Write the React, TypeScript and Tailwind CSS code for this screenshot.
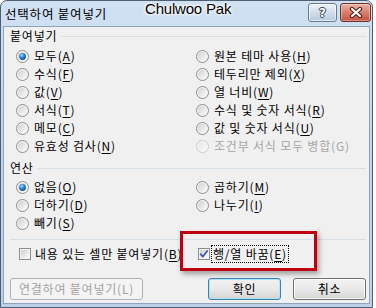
import React from "react";

function Mn({ t, k, disabled }: { t: string; k: string; disabled?: boolean }) {
  return (
    <span className={disabled ? "text-[#a6a6a6] whitespace-nowrap" : "whitespace-nowrap"}>
      {t}(
      <span className={disabled ? "" : "underline underline-offset-[2px] decoration-[1px]"}>{k}</span>)
    </span>
  );
}

function Radio({ checked, disabled }: { checked?: boolean; disabled?: boolean }) {
  return (
    <svg width="13" height="13" viewBox="0 0 13 13" className="shrink-0">
      <defs>
        <linearGradient id="rfill" x1="0" y1="0" x2="1" y2="1">
          <stop offset="0" stopColor="#cfcfcf" />
          <stop offset="1" stopColor="#fdfdfd" />
        </linearGradient>
        <linearGradient id="rfillD" x1="0" y1="0" x2="1" y2="1">
          <stop offset="0" stopColor="#e6e6e6" />
          <stop offset="1" stopColor="#fbfbfb" />
        </linearGradient>
        <radialGradient id="rdot" cx="0.38" cy="0.32" r="0.75">
          <stop offset="0" stopColor="#a6dcff" />
          <stop offset="0.45" stopColor="#2b8ce0" />
          <stop offset="1" stopColor="#0b3e8a" />
        </radialGradient>
      </defs>
      <circle cx="6.5" cy="6.5" r="6" fill="#f6f6f6" stroke={disabled ? "#cacaca" : "#8c8c8c"} strokeWidth="1" />
      <circle cx="6.5" cy="6.5" r="4.6" fill={disabled ? "url(#rfillD)" : "url(#rfill)"} />
      {checked && <circle cx="6.5" cy="6.5" r="3.4" fill="url(#rdot)" />}
    </svg>
  );
}

function Check({ checked }: { checked?: boolean }) {
  return (
    <svg width="12" height="12" viewBox="0 0 12 12" className="shrink-0">
      <defs>
        <linearGradient id="cfill" x1="0" y1="0" x2="1" y2="1">
          <stop offset="0" stopColor="#cfcfcf" />
          <stop offset="1" stopColor="#fbfbfb" />
        </linearGradient>
      </defs>
      <rect x="0.5" y="0.5" width="11" height="11" fill="#f5f5f5" stroke="#8c8c8c" />
      <rect x="2" y="2" width="8" height="8" fill="url(#cfill)" />
      {checked && (
        <path d="M2.6 6.2 L4.9 8.6 L9.4 2.8" fill="none" stroke="#3d57a6" strokeWidth="1.7" strokeLinecap="round" strokeLinejoin="round" />
      )}
    </svg>
  );
}

function RadioRow({ t, k, checked, disabled }: { t: string; k: string; checked?: boolean; disabled?: boolean }) {
  return (
    <div className="flex items-center gap-[5px] h-[18px]">
      <Radio checked={checked} disabled={disabled} />
      <Mn t={t} k={k} disabled={disabled} />
    </div>
  );
}

function GroupHeader({ label }: { label: string }) {
  return (
    <div className="flex items-center h-[18px] gap-[4px]">
      <span className="whitespace-nowrap">{label}</span>
      <div className="flex-1 h-px bg-[#d5dfe5]" />
    </div>
  );
}

export default function App() {
  return (
    <div className="relative w-[376px] h-[308px] bg-white overflow-hidden font-['Noto_Sans_CJK_KR','Noto_Sans',sans-serif] text-[12px] leading-[18px] tracking-[0.8px] text-black">
      <div className="flex flex-col w-[373px] h-[308px] rounded-t-[7px] border border-[#4e5e70] bg-linear-to-b from-[#d0e1f3] via-[#c0d5eb] to-[#bcd1e8]">
        {/* title bar */}
        <div className="flex items-start h-[25px] shrink-0 pl-[4px] pr-[1px]">
          <span className="mt-[4px] text-[12.5px] leading-[17px] whitespace-nowrap">선택하여 붙여넣기</span>
          <div className="ml-auto mt-[2px] flex gap-[3px] tracking-normal">
            <div className="relative w-[29px] h-[19px] rounded-[3px] border border-[#6b7b8c] bg-linear-to-b from-[#eef3f9] via-[#d2deeb] to-[#b9cadd] shadow-[inset_0_0_0_1px_rgba(255,255,255,0.6)] flex items-center justify-center">
              <span className="font-['DejaVu_Sans',sans-serif] font-bold text-[12px] leading-[12px] text-white [text-shadow:0_0_1px_#3a4654,1px_0_0_#3a4654,-1px_0_0_#3a4654,0_1px_0_#3a4654,0_-1px_0_#3a4654]">?</span>
            </div>
            <div className="relative w-[31px] h-[19px] rounded-[3px] border border-[#6e2f27] bg-linear-to-b from-[#eab2a5] via-[#d7806c] to-[#c4503c] shadow-[inset_0_0_0_1px_rgba(255,255,255,0.35)] flex items-center justify-center">
              <svg width="14" height="11" viewBox="0 0 14 11">
                <path d="M3 2 L11 9 M11 2 L3 9" stroke="#4a1d18" strokeWidth="4.2" strokeLinecap="round" />
                <path d="M3 2 L11 9 M11 2 L3 9" stroke="#ffffff" strokeWidth="2.2" strokeLinecap="round" />
              </svg>
            </div>
          </div>
        </div>

        {/* client area */}
        <div className="flex-1 mx-[2px] mb-[3px] border border-[#8ea4bc] bg-[#f0f0f0] flex flex-col pl-[6px] pr-[3px]">
          <GroupHeader label="붙여넣기" />
          <div className="mt-[2px] ml-[6px] grid grid-cols-[180px_1fr]">
            <RadioRow t="모두" k="A" checked />
            <RadioRow t="원본 테마 사용" k="H" />
            <RadioRow t="수식" k="F" />
            <RadioRow t="테두리만 제외" k="X" />
            <RadioRow t="값" k="V" />
            <RadioRow t="열 너비" k="W" />
            <RadioRow t="서식" k="T" />
            <RadioRow t="수식 및 숫자 서식" k="R" />
            <RadioRow t="메모" k="C" />
            <RadioRow t="값 및 숫자 서식" k="U" />
            <RadioRow t="유효성 검사" k="N" />
            <RadioRow t="조건부 서식 모두 병합" k="G" disabled />
          </div>

          <div className="mt-[4px]">
            <GroupHeader label="연산" />
          </div>
          <div className="mt-[1px] ml-[6px] grid grid-cols-[180px_1fr]">
            <RadioRow t="없음" k="O" checked />
            <RadioRow t="곱하기" k="M" />
            <RadioRow t="더하기" k="D" />
            <RadioRow t="나누기" k="I" />
            <RadioRow t="빼기" k="S" />
          </div>

          <div className="mt-[7px] h-px bg-[#d5dfe5]" />

          <div className="mt-[5px] ml-[9px] flex items-center h-[18px]">
            <div className="w-[179px] flex items-center gap-[4px]">
              <Check />
              <Mn t="내용 있는 셀만 붙여넣기" k="B" />
            </div>
            <div className="flex items-center gap-[2px]">
              <Check checked />
              <span className="outline-1 outline-dotted outline-[#000] px-[1px] leading-[16px]">
                <Mn t="행/열 바꿈" k="E" />
              </span>
            </div>
          </div>

          <div className="mt-[15px] flex items-center h-[22px]">
            <div className="w-[133px] h-[22px] rounded-[3px] border border-[#adb2b5] bg-[#f4f4f4] text-[#a3a3a3] flex items-center justify-center whitespace-nowrap">
              연결하여 붙여넣기(L)
            </div>
            <div className="ml-auto w-[73px] h-[22px] rounded-[3px] border border-[#3c7fb1] bg-linear-to-b from-[#f2f2f2] via-[#e9e9e9] to-[#d4d4d4] shadow-[inset_0_0_0_1px_#aee6fb] flex items-center justify-center">
              확인
            </div>
            <div className="ml-[12px] w-[73px] h-[22px] rounded-[3px] border border-[#707070] bg-linear-to-b from-[#f2f2f2] via-[#e9e9e9] to-[#d4d4d4] shadow-[inset_0_0_0_1px_rgba(255,255,255,0.8)] flex items-center justify-center">
              취소
            </div>
          </div>
        </div>
      </div>

      {/* watermark */}
      <div className="absolute left-[145px] top-[0px] font-['Liberation_Sans',sans-serif] text-[15px] leading-[18px] text-black tracking-[-0.2px] [text-shadow:0_0_3px_#fff,0_0_3px_#fff,0_0_4px_#fff]">
        Chulwoo Pak
      </div>

      {/* red highlight */}
      <div className="absolute left-[180px] top-[231px] w-[137px] h-[40px] border-[3px] border-[#c00010] shadow-[2px_3px_5px_rgba(0,0,0,0.35)]" />
    </div>
  );
}
